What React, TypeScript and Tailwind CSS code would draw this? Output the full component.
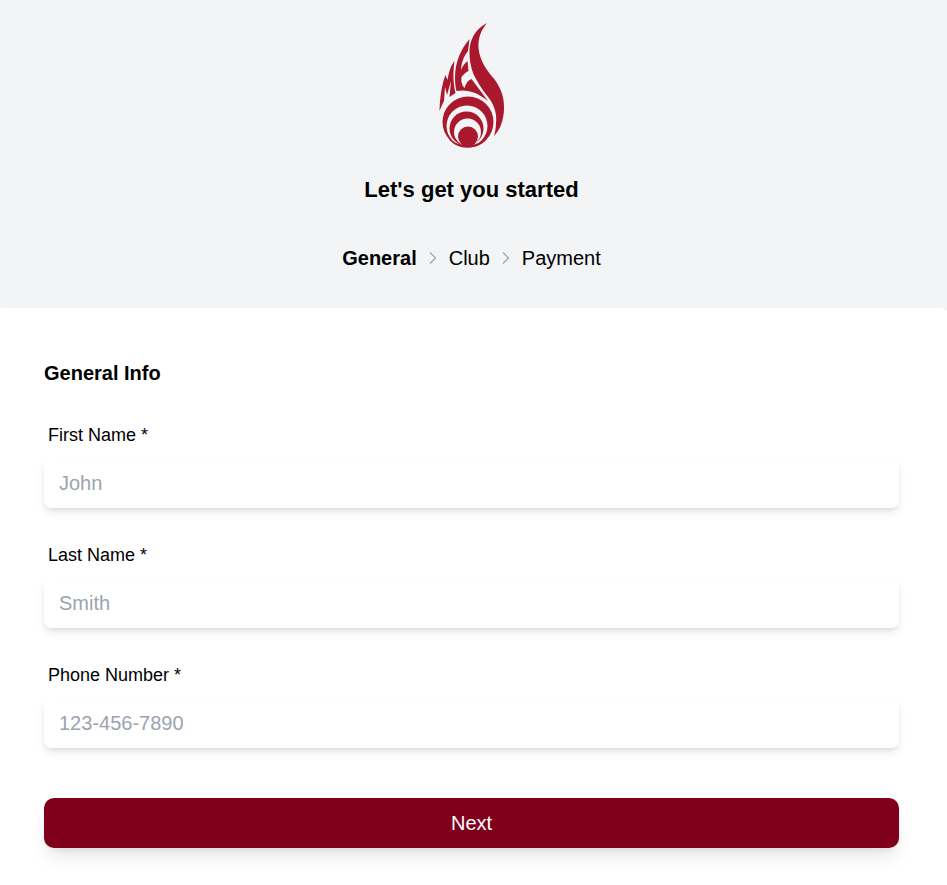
const steps = ["General", "Club", "Payment"];

const fields = [
  { id: "first-name", label: "First Name *", placeholder: "John", type: "text" },
  { id: "last-name", label: "Last Name *", placeholder: "Smith", type: "text" },
  { id: "phone", label: "Phone Number *", placeholder: "123-456-7890", type: "tel" },
];

function FlameLogo() {
  return (
    <svg viewBox="430 15 84 138" className="h-[138px] w-[84px]" role="img" aria-label="Flame logo">
      <g fill="#a9182d">
        <path d="M487 23C475 29 469.500 40 469.500 52C469.500 63 472 72 476 79C480 87 486 94 491 101C495 108 497 115 496 123C496 128 495 132 494 136C500 130 504 120 504 108C504 96 501 89 495 80C488 72 479.500 61 478.500 48C478 38 481 30 487 23Z" />
        <path d="M469.500 39C461 49 455 62 455 78C455 83 455.500 87 456.500 91C467 89 477 92 488 101L471.500 79C468 80 466 83 464.500 88C461.500 85 461 80 461.500 77C464 74 466 72 468.500 71L467.500 61C465 63 462.500 66 461 70C461.500 62 464 56 468 51Z" />
        <path d="M454.500 61C450.500 66 449 72 447.500 80L445.500 75C442 84 440 96 439.500 111C441 107 442.500 104 444 101L445 87L447 95L451 81L449.500 97L455.500 93C453 83 453 72 454.500 61Z" />
      </g>
      <circle cx="468" cy="122" r="25.5" fill="#a9182d" />
      <circle cx="467" cy="126" r="20.5" fill="#f3f4f6" />
      <circle cx="466.5" cy="128.5" r="17" fill="#a9182d" />
      <circle cx="467.5" cy="132" r="13.5" fill="#f3f4f6" />
      <circle cx="468" cy="136.5" r="10" fill="#a9182d" />
      <path d="M448 138C453 145 461 148 468 147.500C475 147.500 482 145 487 139C481 143 474 145 468 145C460 145 454 143 448 138Z" fill="#a9182d" />
    </svg>
  );
}

function Chevron() {
  return (
    <svg viewBox="0 0 8 14" className="h-3.5 w-2 shrink-0" fill="none" stroke="#9ca3af" strokeWidth="1.2" aria-hidden="true">
      <path d="M1 1.5L6.5 7L1 12.5" />
    </svg>
  );
}

export default function App() {
  return (
    <div className="min-h-screen overflow-hidden bg-[#f3f4f6] font-['Liberation_Sans',Arial,sans-serif] text-black">
      <div className="-mr-1 -ml-2 flex min-h-screen flex-col">
        <header className="flex flex-col items-center pt-[15px]">
          <FlameLogo />
          <h1 className="mt-5 text-[22px] leading-[34px] font-bold">Let's get you started</h1>
          <nav aria-label="Progress" className="mt-[37px] mb-9">
            <ol className="flex items-center gap-3 text-[20px] leading-7">
              {steps.map((step, i) => (
                <li key={step} className="flex items-center gap-3">
                  {i > 0 && <Chevron />}
                  <span className={i === 0 ? "font-bold" : ""}>{step}</span>
                </li>
              ))}
            </ol>
          </nav>
        </header>
        <main className="grow rounded-t-xl bg-white px-13 pt-[51px] pb-9">
          <form>
            <h2 className="text-[20px] leading-7 font-bold">General Info</h2>
            <div className="mt-9 flex flex-col gap-[35px]">
              {fields.map((f) => (
                <div key={f.id}>
                  <label htmlFor={f.id} className="block px-1 text-[18px] leading-6">{f.label}</label>
                  <input
                    id={f.id}
                    type={f.type}
                    placeholder={f.placeholder}
                    className="mt-[11px] block h-[50px] w-full rounded-lg bg-white px-[15px] text-[20px] shadow-[0_5px_8px_-1px_rgba(0,0,0,0.1),0_2px_5px_-2px_rgba(0,0,0,0.1)] outline-none placeholder:text-[#9ca3af]"
                  />
                </div>
              ))}
            </div>
            <button type="button" className="mt-[50px] h-[50px] w-full rounded-[10px] bg-[#80001c] text-[20px] text-white shadow-[0_12px_19px_-4px_rgba(0,0,0,0.1),0_5px_8px_-5px_rgba(0,0,0,0.1)]">
              Next
            </button>
          </form>
        </main>
      </div>
    </div>
  );
}
